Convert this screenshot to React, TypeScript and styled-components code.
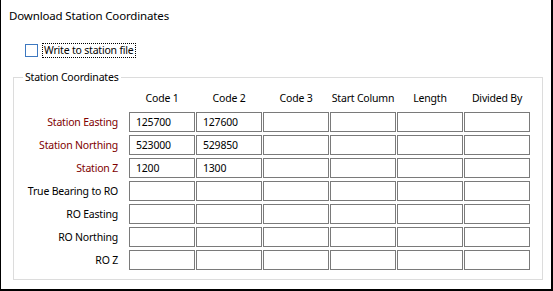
import { Fragment } from "react";
import styled, { createGlobalStyle } from "styled-components";

const GlobalStyle = createGlobalStyle`
    html, body {
        margin: 0;
        padding: 0;
        background: #ffffff;
    }
    body {
        font-family: "Noto Sans", "Liberation Sans", sans-serif;
        font-size: 10.5px;
        letter-spacing: -0.2px;
        color: #000000;
    }
`;

const Window = styled.div`
    box-sizing: border-box;
    width: 553px;
    height: 291px;
    display: flex;
    flex-direction: column;
    background: #ffffff;
    border-left: 1px solid #000000;
    border-right: 2px solid #000000;
    border-bottom: 2px solid #000000;
`;

const Title = styled.div`
    padding: 8px 0 0 8px;
    height: 16px;
    line-height: 16px;
    font-size: 11.5px;
    letter-spacing: -0.15px;
`;

const CheckRow = styled.label`
    display: flex;
    align-items: center;
    gap: 4px;
    margin: 18px 0 0 24px;
    height: 16px;
`;

const CheckBox = styled.span`
    box-sizing: border-box;
    width: 13px;
    height: 13px;
    border: 1px solid #3d78c0;
    background: #ffffff;
`;

const CheckText = styled.span`
    padding: 0 1px;
    line-height: 13px;
    border: 1px dotted #000000;
`;

const Group = styled.fieldset`
    box-sizing: border-box;
    width: 530px;
    height: 210px;
    margin: 12px 0 0 12px;
    padding: 0;
    border: 1px solid #dcdcdc;
`;

const Legend = styled.legend`
    margin-left: 9px;
    padding: 0 3px 0 2px;
    line-height: 14px;
`;

const Grid = styled.div`
    display: grid;
    grid-template-columns: 114px repeat(6, 66px);
    grid-auto-rows: 20px;
    column-gap: 1px;
    row-gap: 3px;
    padding-top: 5px;
`;

const Header = styled.div`
    display: flex;
    align-items: center;
    justify-content: center;
    white-space: nowrap;
    padding-bottom: 3px;
`;

const RowLabel = styled.div<{ $accent?: boolean }>`
    display: flex;
    align-items: center;
    justify-content: flex-end;
    white-space: nowrap;
    padding-right: 10px;
    color: ${props => (props.$accent ? "#800000" : "#000000")};
`;

const Field = styled.div`
    box-sizing: border-box;
    display: flex;
    align-items: center;
    padding-left: 6px;
    border: 1px solid #7a7a7a;
    background: #ffffff;
`;

const columns = ["Code 1", "Code 2", "Code 3", "Start Column", "Length", "Divided By"];

const rows: { label: string; accent: boolean; values: string[] }[] = [
    { label: "Station Easting", accent: true, values: ["125700", "127600"] },
    { label: "Station Northing", accent: true, values: ["523000", "529850"] },
    { label: "Station Z", accent: true, values: ["1200", "1300"] },
    { label: "True Bearing to RO", accent: false, values: [] },
    { label: "RO Easting", accent: false, values: [] },
    { label: "RO Northing", accent: false, values: [] },
    { label: "RO Z", accent: false, values: [] }
];

const App = () => {
    return (
        <>
            <GlobalStyle />
            <Window>
                <Title>Download Station Coordinates</Title>
                <CheckRow>
                    <CheckBox />
                    <CheckText>Write to station file</CheckText>
                </CheckRow>
                <Group>
                    <Legend>Station Coordinates</Legend>
                    <Grid>
                        <div />
                        {columns.map(col => (
                            <Header key={col}>{col}</Header>
                        ))}
                        {rows.map(row => (
                            <Fragment key={row.label}>
                                <RowLabel $accent={row.accent}>{row.label}</RowLabel>
                                {columns.map((col, i) => (
                                    <Field key={col}>{row.values[i] ?? ""}</Field>
                                ))}
                            </Fragment>
                        ))}
                    </Grid>
                </Group>
            </Window>
        </>
    );
};

export default App;
